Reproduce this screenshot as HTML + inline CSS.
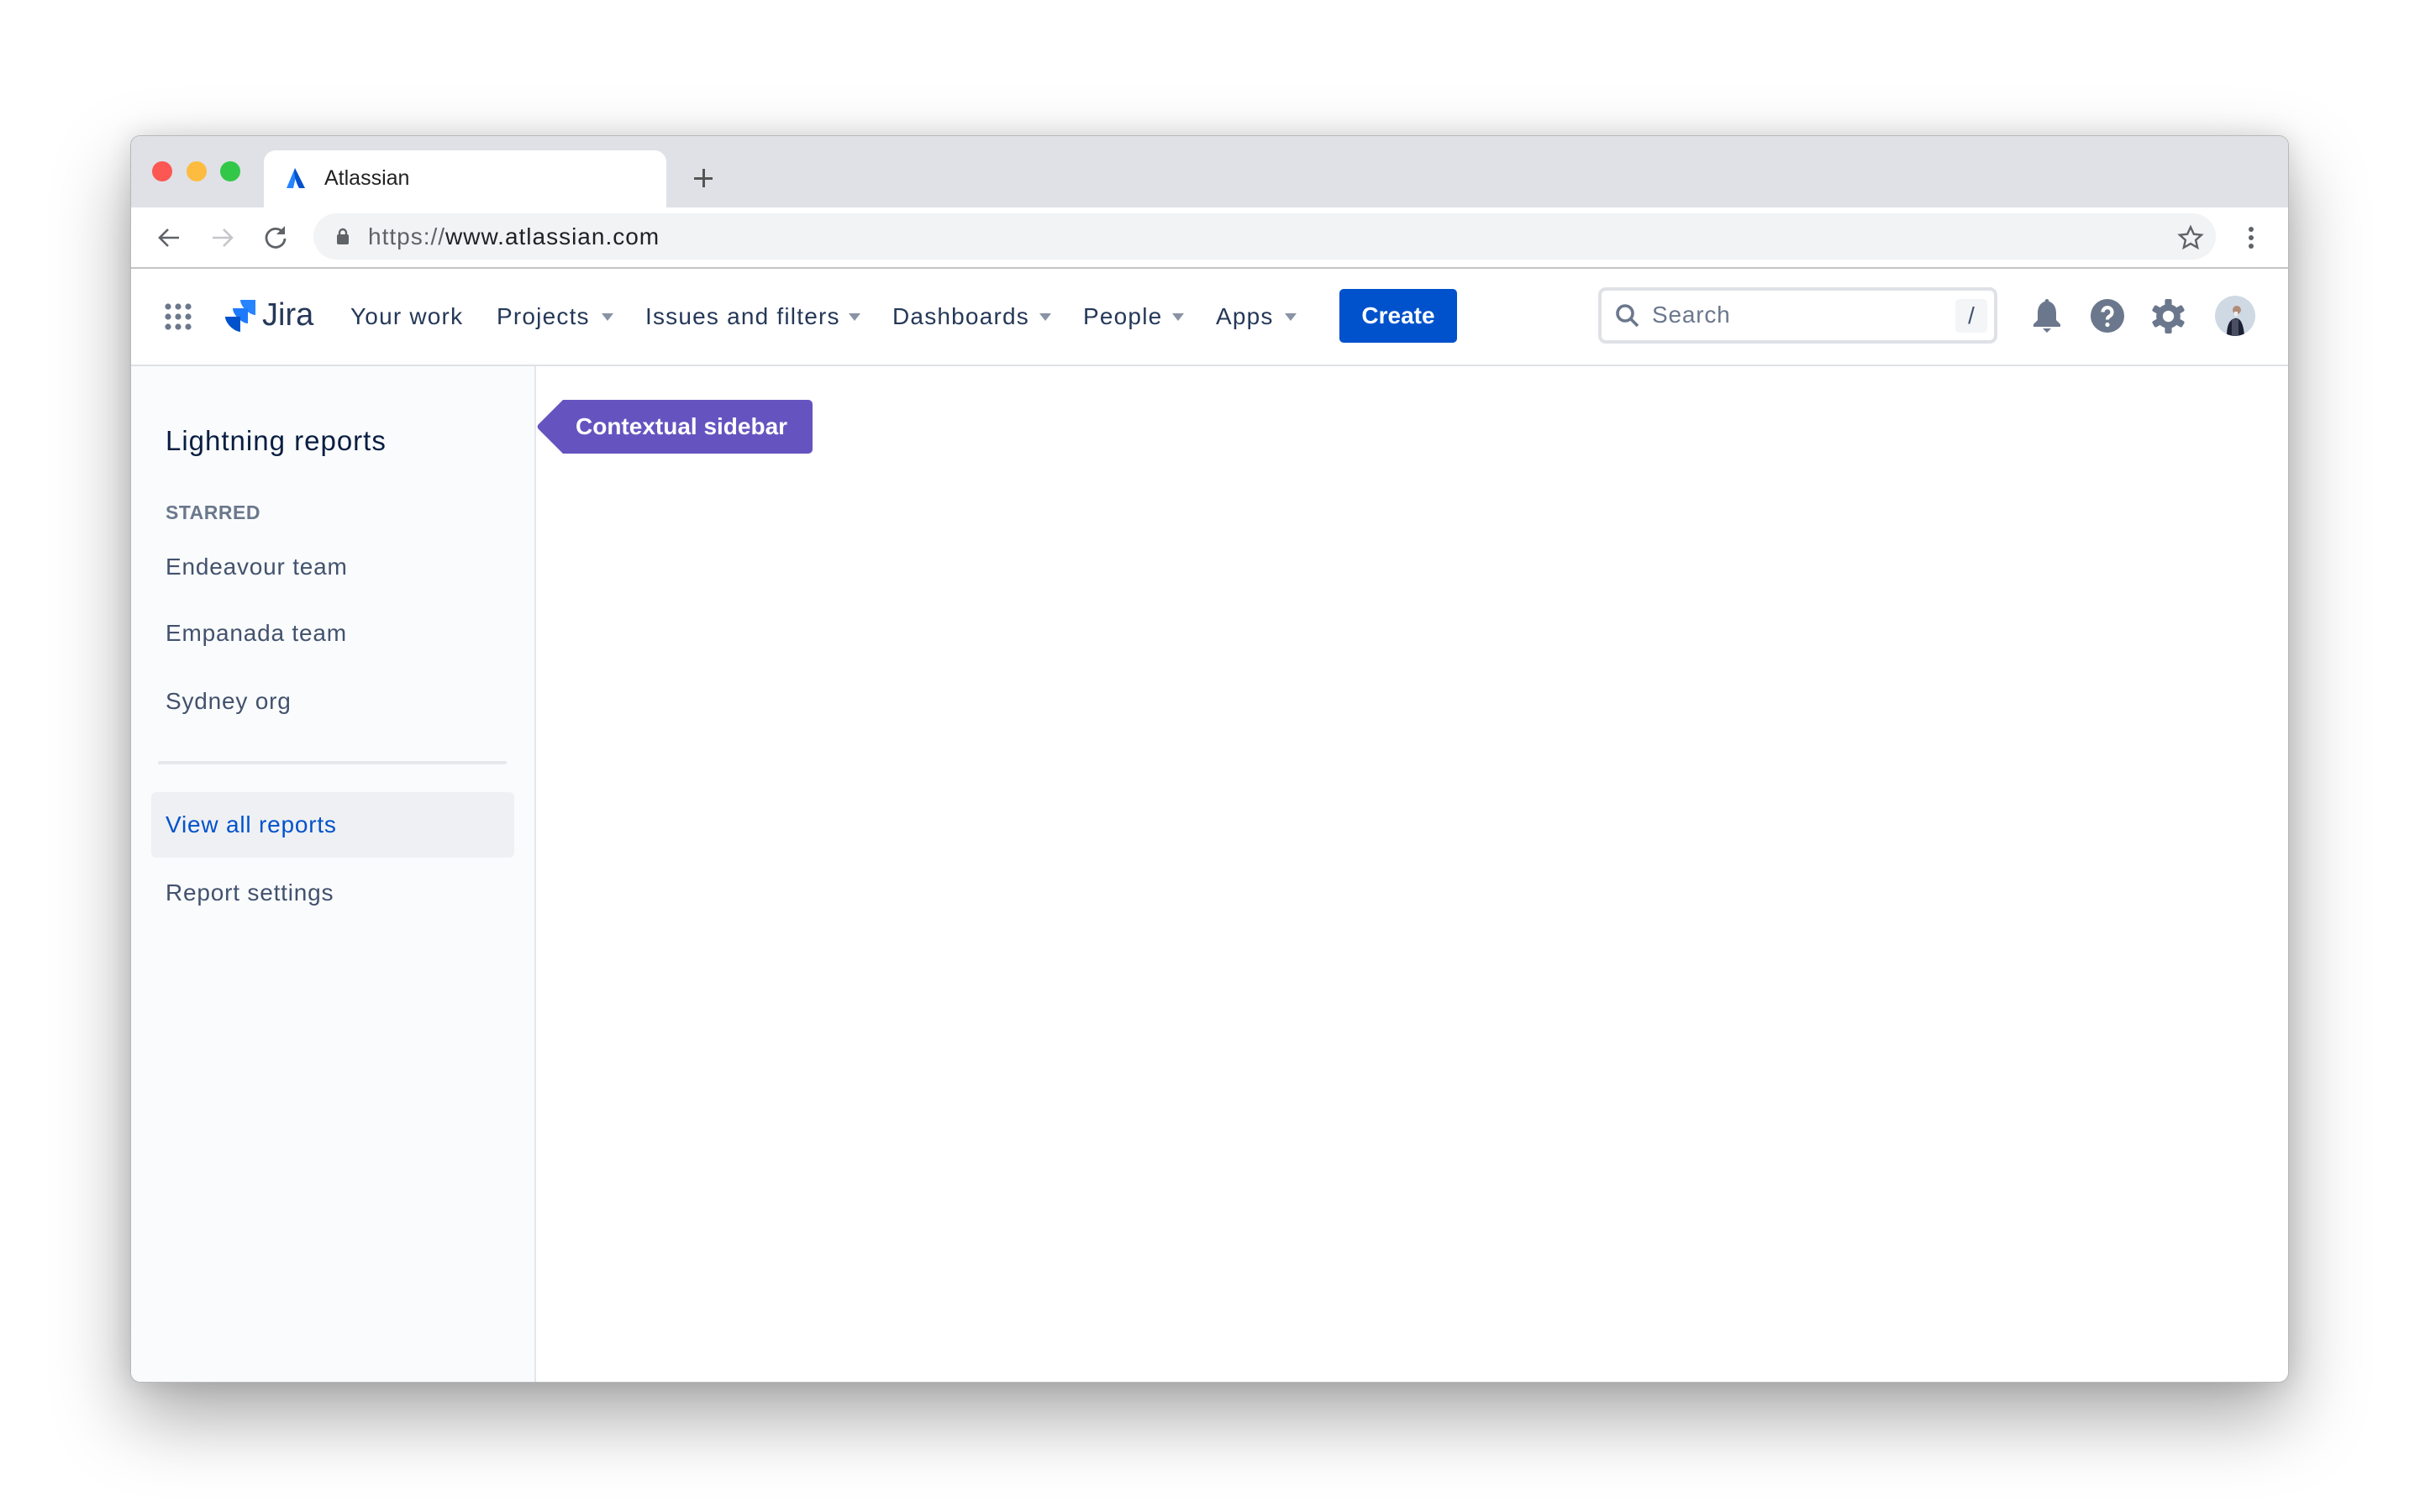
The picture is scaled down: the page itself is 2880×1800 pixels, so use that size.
<!DOCTYPE html>
<html><head><meta charset="utf-8"><style>
*{margin:0;padding:0;box-sizing:border-box}
body{width:2880px;height:1800px;background:#fff;position:relative;overflow:hidden;font-family:"Liberation Sans",sans-serif}
.a{position:absolute}
.win{left:155px;top:161px;width:2569px;height:1485px;border-radius:12px;border:1px solid #b8b8bb;background:#fff;overflow:hidden;box-shadow:0 40px 90px rgba(0,0,0,.35),0 0 30px rgba(0,0,0,.12)}
.nav{font-size:28px;color:#253858;top:358px;line-height:38px;white-space:nowrap;letter-spacing:1.2px}
.car{width:0;height:0;border-left:7px solid transparent;border-right:7px solid transparent;border-top:9px solid #8993a4;top:373px}
.sb{font-size:28px;color:#42526e;line-height:36px;left:197px;letter-spacing:.8px}
</style></head><body>
<div class="a win">
  <div class="a" style="left:0;top:0;width:100%;height:85px;background:#dfe1e6"></div>
  <div class="a" style="left:158px;top:17px;width:479px;height:80px;background:#fff;border-radius:14px 14px 0 0"></div>
  <div class="a" style="left:0;top:85px;width:100%;height:73px;background:#fff;border-bottom:2px solid #c4c4c6"></div>
  <div class="a" style="left:0;top:272px;width:100%;height:2px;background:#dfe1e6"></div>
  <div class="a" style="left:0;top:274px;width:482px;height:1211px;background:#fafbfc;border-right:2px solid #e4e6ea"></div>
</div>
<div class="a" style="left:181px;top:192px;width:24px;height:24px;border-radius:50%;background:#fc5753"></div>
<div class="a" style="left:222px;top:192px;width:24px;height:24px;border-radius:50%;background:#fdbc40"></div>
<div class="a" style="left:262px;top:192px;width:24px;height:24px;border-radius:50%;background:#33c748"></div>
<svg class="a" style="left:340px;top:199px" width="24" height="25" viewBox="0 0 24 25"><path d="M11 1 L1 25 H9 L12 12 Z" fill="#2684ff"/><path d="M11 1 C9 8 12 18 16 25 H23 Z" fill="#0052cc"/></svg>
<div class="a" style="left:386px;top:197px;font-size:25px;color:#222;line-height:30px">Atlassian</div>
<div class="a" style="left:826px;top:211px;width:22px;height:3px;background:#555"></div>
<div class="a" style="left:836px;top:201px;width:3px;height:22px;background:#555"></div>
<svg class="a" style="left:186px;top:268px" width="30" height="30" viewBox="0 0 30 30" fill="none" stroke="#5f6368" stroke-width="2.6"><path d="M27 15H4M14 5L4 15l10 10"/></svg>
<svg class="a" style="left:250px;top:268px" width="30" height="30" viewBox="0 0 30 30" fill="none" stroke="#c4c6c9" stroke-width="2.6"><path d="M3 15h23M16 5l10 10-10 10"/></svg>
<svg class="a" style="left:313px;top:267px" width="30" height="30" viewBox="0 0 30 30" fill="none" stroke="#5f6368" stroke-width="2.8"><path d="M24 10A11 11 0 1 0 26 17"/><path d="M26 2v10H16z" fill="#5f6368" stroke="none"/></svg>
<div class="a" style="left:373px;top:254px;width:2264px;height:55px;border-radius:28px;background:#f1f3f4"></div>
<svg class="a" style="left:400px;top:270px" width="16" height="22" viewBox="0 0 16 22"><path d="M4 10V7a4 4 0 0 1 8 0v3" fill="none" stroke="#5f6368" stroke-width="2.4"/><rect x="1" y="9" width="14" height="12" rx="2" fill="#5f6368"/></svg>
<div class="a" style="left:438px;top:265px;font-size:28px;line-height:34px;color:#5f6368;white-space:nowrap;letter-spacing:1px">https://<span style="color:#202124">www.atlassian.com</span></div>
<svg class="a" style="left:2591px;top:267px" width="32" height="32" viewBox="0 0 24 24" fill="none" stroke="#5f6368" stroke-width="1.8"><path d="M12 2.5l2.9 6.3 6.8.7-5.1 4.6 1.5 6.7L12 17.3l-6.1 3.5 1.5-6.7-5.1-4.6 6.8-.7z"/></svg>
<div class="a" style="left:2676px;top:270px;width:6px;height:6px;border-radius:50%;background:#5f6368;box-shadow:0 10px 0 #5f6368,0 20px 0 #5f6368"></div>
<svg class="a" style="left:196px;top:361px" width="32" height="32" viewBox="0 0 32 32" fill="#6b778c"><circle cx="4" cy="4" r="3.6"/><circle cx="16" cy="4" r="3.6"/><circle cx="28" cy="4" r="3.6"/><circle cx="4" cy="16" r="3.6"/><circle cx="16" cy="16" r="3.6"/><circle cx="28" cy="16" r="3.6"/><circle cx="4" cy="28" r="3.6"/><circle cx="16" cy="28" r="3.6"/><circle cx="28" cy="28" r="3.6"/></svg>
<svg class="a" style="left:267px;top:355px" width="38" height="40" viewBox="0 0 38 40"><path d="M19 2h18v18C30 20 19 10 19 2z" fill="#2684ff"/><path d="M10 12h18v18C21 30 10 20 10 12z" fill="#1d7afc"/><path d="M1 22h18v18C12 40 1 30 1 22z" fill="#0052cc"/></svg>
<div class="a" style="left:312px;top:352px;font-size:38px;color:#253858;line-height:46px">Jira</div>
<div class="a nav" style="left:417px">Your work</div>
<div class="a nav" style="left:591px">Projects</div><div class="a car" style="left:716px"></div>
<div class="a nav" style="left:768px">Issues and filters</div><div class="a car" style="left:1010px"></div>
<div class="a nav" style="left:1062px">Dashboards</div><div class="a car" style="left:1237px"></div>
<div class="a nav" style="left:1289px">People</div><div class="a car" style="left:1395px"></div>
<div class="a nav" style="left:1447px">Apps</div><div class="a car" style="left:1529px"></div>
<div class="a" style="left:1594px;top:344px;width:140px;height:64px;background:#0052cc;border-radius:5px;color:#fff;font-size:28px;font-weight:bold;text-align:center;line-height:64px">Create</div>
<div class="a" style="left:1902px;top:342px;width:475px;height:67px;border:4px solid #dfe1e6;border-radius:9px;background:#fff"></div>
<svg class="a" style="left:1922px;top:361px" width="30" height="30" viewBox="0 0 30 30" fill="none" stroke="#6b778c" stroke-width="3.6"><circle cx="12" cy="12" r="9"/><path d="M19 19l8 8"/></svg>
<div class="a" style="left:1966px;top:357px;font-size:28px;color:#6b778c;line-height:36px;letter-spacing:.8px">Search</div>
<div class="a" style="left:2327px;top:356px;width:38px;height:40px;background:#f4f5f7;border-radius:5px;color:#42526e;font-size:28px;text-align:center;line-height:40px">/</div>
<svg class="a" style="left:2418px;top:355px" width="36" height="42" viewBox="0 0 36 42" fill="#6b778c"><path d="M18 1c2 0 2.5 2 2.5 3C27 6 29 12 29 18v8l5 5v3H2v-3l5-5v-8c0-6 2-12 8.5-14C15.5 3 16 1 18 1z"/><path d="M13 36h10l-5 5z"/></svg>
<svg class="a" style="left:2488px;top:356px" width="40" height="40" viewBox="0 0 40 40"><circle cx="20" cy="20" r="20" fill="#6b778c"/><path d="M14.5 15.5a5.5 5.5 0 1 1 8 5c-2 1-2.5 2-2.5 4" fill="none" stroke="#fff" stroke-width="4.2"/><circle cx="20" cy="30.5" r="2.6" fill="#fff"/></svg>
<svg class="a" style="left:2560px;top:356px" width="41" height="41" viewBox="0 0 40 40"><g fill="#6b778c"><circle cx="20" cy="20" r="14"/><rect x="16" y="0" width="8" height="40" rx="2"/><rect x="16" y="0" width="8" height="40" rx="2" transform="rotate(60 20 20)"/><rect x="16" y="0" width="8" height="40" rx="2" transform="rotate(120 20 20)"/></g><circle cx="20" cy="20" r="6.5" fill="#fff"/></svg>
<svg class="a" style="left:2636px;top:352px" width="48" height="48" viewBox="0 0 48 48"><defs><clipPath id="c"><circle cx="24" cy="24" r="24"/></clipPath></defs><g clip-path="url(#c)"><rect width="48" height="48" fill="#cfd9e4"/><path d="M14 48c0-14 4-20 10-21s10 6 11 21z" fill="#1c2233"/><rect x="20" y="28" width="8" height="20" fill="#4b4d63"/><circle cx="26" cy="17" r="5" fill="#b08c78"/><rect x="23" y="19" width="4" height="5" fill="#eee"/></g></svg>
<div class="a" style="left:197px;top:505px;font-size:33px;color:#091e42;line-height:40px;letter-spacing:1px">Lightning reports</div>
<div class="a" style="left:197px;top:596px;font-size:23px;color:#6b778c;font-weight:bold;line-height:28px;letter-spacing:.5px">STARRED</div>
<div class="a sb" style="top:657px">Endeavour team</div>
<div class="a sb" style="top:736px">Empanada team</div>
<div class="a sb" style="top:817px">Sydney org</div>
<div class="a" style="left:188px;top:906px;width:415px;height:4px;background:#e6e8ec;border-radius:2px"></div>
<div class="a" style="left:180px;top:943px;width:432px;height:78px;background:#eff0f3;border-radius:6px"></div>
<div class="a sb" style="top:964px;color:#0052cc">View all reports</div>
<div class="a sb" style="top:1045px">Report settings</div>
<svg class="a" style="left:639px;top:476px" width="328" height="64" viewBox="0 0 328 64"><path d="M31 0H323a5 5 0 0 1 5 5V59a5 5 0 0 1-5 5H31L2 35a4 4 0 0 1 0-6Z" fill="#6554c0"/></svg>
<div class="a" style="left:685px;top:490px;font-size:28px;color:#fff;line-height:36px;font-weight:bold">Contextual sidebar</div>
</body></html>
